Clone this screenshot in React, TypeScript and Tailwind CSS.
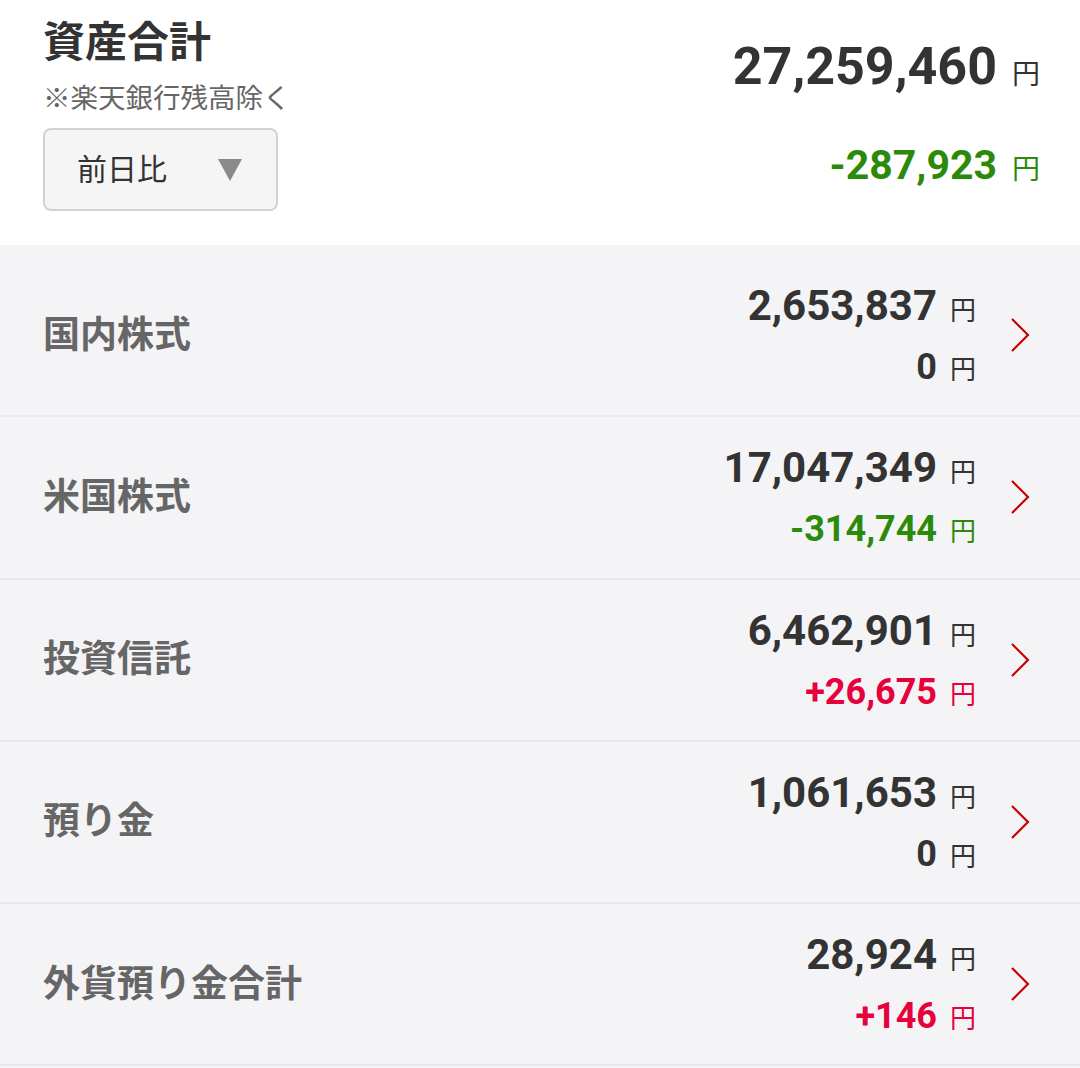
import React from "react";

type Tone = "plain" | "down" | "up";

interface Asset {
  label: string;
  amount: string;
  diff: string;
  tone: Tone;
}

const ASSETS: Asset[] = [
  { label: "国内株式", amount: "2,653,837", diff: "0", tone: "plain" },
  { label: "米国株式", amount: "17,047,349", diff: "-314,744", tone: "down" },
  { label: "投資信託", amount: "6,462,901", diff: "+26,675", tone: "up" },
  { label: "預り金", amount: "1,061,653", diff: "0", tone: "plain" },
  { label: "外貨預り金合計", amount: "28,924", diff: "+146", tone: "up" },
];

const TONE_STYLE: Record<Tone, string> = {
  plain: "text-[#333333]",
  down: "text-[#2b8a0a]",
  up: "text-[#e6003c]",
};

const FONT = "font-['Roboto','Noto_Sans_CJK_JP',sans-serif]";

function Chevron() {
  return (
    <svg width="20" height="36" viewBox="0 0 20 36" className="shrink-0">
      <path d="M2 2 L18 18 L2 34" fill="none" stroke="#c80000" strokeWidth="2.2" />
    </svg>
  );
}

function AssetRow({ a }: { a: Asset }) {
  const tone = TONE_STYLE[a.tone];
  return (
    <div className="flex h-[162.25px] items-center justify-between border-b-2 border-[#e9e9eb] pl-[43px] pr-[50px]">
      <span className="text-[37px] font-bold leading-none text-[#666666]">{a.label}</span>
      <div className="flex items-center gap-[34px]">
        <div className="flex flex-col items-end gap-[22px]">
          <div className="flex items-baseline text-[#333333]">
            <span className="text-[42px] font-bold leading-[42px]">{a.amount}</span>
            <span className="ml-[13px] text-[26px] leading-none">円</span>
          </div>
          <div className={`flex items-baseline ${tone}`}>
            <span className="text-[36px] font-bold leading-[36px]">{a.diff}</span>
            <span className="ml-[13px] text-[26px] leading-none">円</span>
          </div>
        </div>
        <Chevron />
      </div>
    </div>
  );
}

export default function App() {
  return (
    <div className={`${FONT} w-[1080px] h-[1068px] overflow-hidden bg-[#f4f4f6]`}>
      {/* Header: total assets + day-over-day change */}
      <div className="flex h-[245px] justify-between bg-white pl-[43px] pr-[40px]">
        <div className="flex flex-col pt-[20px]">
          <span className="text-[42px] font-bold leading-[46px] text-[#333333]">資産合計</span>
          <span className="mt-[17px] text-[27.5px] leading-[32px] text-[#666666]">※楽天銀行残高除く</span>
          <button className="mt-[13px] flex h-[83px] w-[235px] items-center justify-between rounded-[8px] border-2 border-[#d2d2d2] bg-[#f5f5f5] pl-[32px] pr-[34px]">
            <span className="text-[30px] leading-none text-[#333333]">前日比</span>
            <svg width="24" height="22" viewBox="0 0 24 22">
              <polygon points="0,0 24,0 12,22" fill="#8a8a8a" />
            </svg>
          </button>
        </div>
        <div className="flex flex-col items-end pt-[39px]">
          <div className="flex items-baseline text-[#333333]">
            <span className="text-[52px] font-bold leading-[56px]">27,259,460</span>
            <span className="ml-[15px] text-[28px] leading-none">円</span>
          </div>
          <div className="mt-[48px] flex items-baseline text-[#2b8a0a]">
            <span className="text-[41px] font-bold leading-[44px]">-287,923</span>
            <span className="ml-[15px] text-[28px] leading-none">円</span>
          </div>
        </div>
      </div>

      {/* Asset breakdown */}
      <div className="pt-[10px]">
        {ASSETS.map((a) => (
          <AssetRow key={a.label} a={a} />
        ))}
      </div>
    </div>
  );
}
